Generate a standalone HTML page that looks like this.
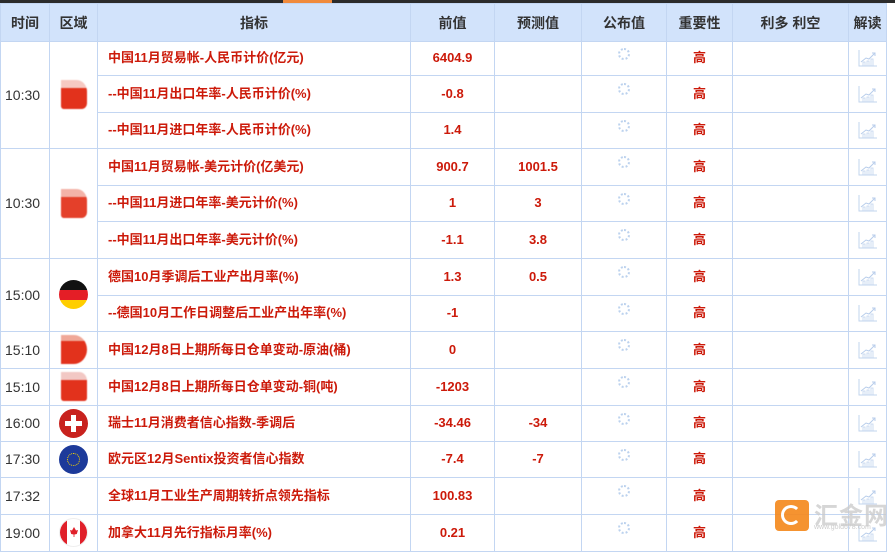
<!DOCTYPE html>
<html><head><meta charset="utf-8"><style>
body{margin:0;width:895px;height:555px;overflow:hidden;background:#fff;font-family:"Liberation Sans","Noto Sans CJK SC",sans-serif;position:relative}
.top{position:absolute;left:0;top:0;width:895px;height:3px;background:#2b2b2b}
.top i{position:absolute;left:283px;width:49px;height:3px;background:#f08a3c}
table{position:absolute;left:0;top:3px;border-collapse:collapse;table-layout:fixed;width:886px}
td,th{border:1px solid #c3d6f2;padding:0;text-align:center;overflow:hidden;white-space:nowrap;line-height:16px}
th{background:#d2e3fb;height:37px;font-size:14px;font-weight:bold;color:#333}
td{font-size:13px;font-weight:bold;color:#cc1a0a;padding-bottom:1px}
td.t{color:#333;font-weight:normal;font-size:14px;text-align:left;padding-left:4px}
td.n{text-align:left;padding-left:10px}
.sp{display:inline-block;vertical-align:middle;width:12px;height:12px;border-radius:50%;border:2px dotted #bcd2ee;box-sizing:border-box;position:relative;top:-5px}
.ch{vertical-align:middle;position:relative;top:0}
.flag{width:29px;height:29px;border-radius:50%;margin:0 auto;overflow:hidden;position:relative}
.logo{position:absolute;left:775px;top:500px;width:34px;height:31px;background:#f58a1f;border-radius:4px;opacity:.92}
.logo:after{content:"";position:absolute;left:6px;top:5px;width:20px;height:20px;border-radius:50%;border:3px solid #fff;border-right-color:transparent;box-sizing:border-box}
.lt{position:absolute;left:814px;top:496px;font-size:24px;color:#ccc;letter-spacing:1px;font-weight:bold;opacity:.8}
.ls{position:absolute;left:814px;top:524px;font-size:7px;color:#ccc}
</style></head><body>
<div class="top"><i></i></div>
<table>
<colgroup><col style="width:49px"><col style="width:48px"><col style="width:313px"><col style="width:84px"><col style="width:87px"><col style="width:85px"><col style="width:66px"><col style="width:116px"><col style="width:38px"></colgroup>
<tr><th>时间</th><th>区域</th><th>指标</th><th>前值</th><th>预测值</th><th>公布值</th><th>重要性</th><th>利多 利空</th><th>解读</th></tr>
<tr style="height:34px"><td class="t" rowspan="3">10:30</td><td rowspan="3"><div class="flag" style="border-radius:0 40% 20% 10%;width:26px;filter:blur(.6px)"><div style="position:absolute;left:0;top:0;width:26px;height:8px;background:#f6c9c2"></div><div style="position:absolute;left:0;top:8px;width:26px;height:21px;background:#e2321c"></div></div></td><td class="n">中国11月贸易帐-人民币计价(亿元)</td><td>6404.9</td><td></td><td><span class="sp"></span></td><td>高</td><td></td><td>CHART</td></tr>
<tr style="height:37px"><td class="n">--中国11月出口年率-人民币计价(%)</td><td>-0.8</td><td></td><td><span class="sp"></span></td><td>高</td><td></td><td>CHART</td></tr>
<tr style="height:36px"><td class="n">--中国11月进口年率-人民币计价(%)</td><td>1.4</td><td></td><td><span class="sp"></span></td><td>高</td><td></td><td>CHART</td></tr>
<tr style="height:37px"><td class="t" rowspan="3">10:30</td><td rowspan="3"><div class="flag" style="border-radius:0 40% 20% 10%;width:26px;filter:blur(.6px)"><div style="position:absolute;left:0;top:0;width:26px;height:8px;background:#f3b3a8"></div><div style="position:absolute;left:0;top:8px;width:26px;height:21px;background:#e4402a"></div></div></td><td class="n">中国11月贸易帐-美元计价(亿美元)</td><td>900.7</td><td>1001.5</td><td><span class="sp"></span></td><td>高</td><td></td><td>CHART</td></tr>
<tr style="height:36px"><td class="n">--中国11月进口年率-美元计价(%)</td><td>1</td><td>3</td><td><span class="sp"></span></td><td>高</td><td></td><td>CHART</td></tr>
<tr style="height:37px"><td class="n">--中国11月出口年率-美元计价(%)</td><td>-1.1</td><td>3.8</td><td><span class="sp"></span></td><td>高</td><td></td><td>CHART</td></tr>
<tr style="height:37px"><td class="t" rowspan="2">15:00</td><td rowspan="2"><div class="flag"><div style="height:10px;background:#111"></div><div style="height:10px;background:#e41e26"></div><div style="height:9px;background:#ffce00"></div></div></td><td class="n">德国10月季调后工业产出月率(%)</td><td>1.3</td><td>0.5</td><td><span class="sp"></span></td><td>高</td><td></td><td>CHART</td></tr>
<tr style="height:36px"><td class="n">--德国10月工作日调整后工业产出年率(%)</td><td>-1</td><td></td><td><span class="sp"></span></td><td>高</td><td></td><td>CHART</td></tr>
<tr style="height:37px"><td class="t">15:10</td><td><div class="flag" style="border-radius:0 50% 50% 0;width:26px;filter:blur(.6px)"><div style="height:6px;background:#f0a898"></div><div style="height:23px;background:#e2321c"></div></div></td><td class="n">中国12月8日上期所每日仓单变动-原油(桶)</td><td>0</td><td></td><td><span class="sp"></span></td><td>高</td><td></td><td>CHART</td></tr>
<tr style="height:37px"><td class="t">15:10</td><td><div class="flag" style="border-radius:0 30% 10% 10%;width:26px;filter:blur(.6px)"><div style="height:8px;background:#f2c8c4"></div><div style="height:21px;background:#e2321c"></div></div></td><td class="n">中国12月8日上期所每日仓单变动-铜(吨)</td><td>-1203</td><td></td><td><span class="sp"></span></td><td>高</td><td></td><td>CHART</td></tr>
<tr style="height:36px"><td class="t">16:00</td><td><div class="flag" style="background:#c8221e"><div style="position:absolute;left:12px;top:6px;width:5px;height:17px;background:#fff"></div><div style="position:absolute;left:6px;top:12px;width:17px;height:5px;background:#fff"></div></div></td><td class="n">瑞士11月消费者信心指数-季调后</td><td>-34.46</td><td>-34</td><td><span class="sp"></span></td><td>高</td><td></td><td>CHART</td></tr>
<tr style="height:36px"><td class="t">17:30</td><td><div class="flag" style="background:#1d3a9a"><div style="position:absolute;left:8px;top:8px;width:13px;height:13px;border-radius:50%;border:1px dotted #f5d300;box-sizing:border-box"></div></div></td><td class="n">欧元区12月Sentix投资者信心指数</td><td>-7.4</td><td>-7</td><td><span class="sp"></span></td><td>高</td><td></td><td>CHART</td></tr>
<tr style="height:37px"><td class="t">17:32</td><td></td><td class="n">全球11月工业生产周期转折点领先指标</td><td>100.83</td><td></td><td><span class="sp"></span></td><td>高</td><td></td><td>CHART</td></tr>
<tr style="height:37px"><td class="t">19:00</td><td><div class="flag" style="background:#fff;border:1px solid #eee;box-sizing:border-box"><div style="position:absolute;left:0;top:0;width:7px;height:29px;background:#e0202a"></div><div style="position:absolute;right:0;top:0;width:7px;height:29px;background:#e0202a"></div><div style="position:absolute;left:10px;top:8px;width:8px;height:10px;background:#e0202a;clip-path:polygon(50% 0,75% 35%,100% 30%,85% 70%,55% 75%,55% 100%,45% 100%,45% 75%,15% 70%,0 30%,25% 35%)"></div></div></td><td class="n">加拿大11月先行指标月率(%)</td><td>0.21</td><td></td><td><span class="sp"></span></td><td>高</td><td></td><td>CHART</td></tr>
</table>
<div class="logo"></div><div class="lt">汇金网</div><div class="ls">www.gold678.com</div>
<script>
document.querySelectorAll('td').forEach(function(t){if(t.textContent==='CHART'){t.innerHTML='<svg class="ch" width="20" height="18" viewBox="0 0 20 18"><path d="M1 1V17H19" fill="none" stroke="#c2d4ee" stroke-width="1"/><path d="M3 13L8 9L11 10L17 4M14 4H17V7" fill="none" stroke="#b8cdeb" stroke-width="1"/><rect x="5" y="13" width="2" height="4" fill="none" stroke="#c2d4ee" stroke-width=".8"/><rect x="9" y="12" width="2" height="5" fill="none" stroke="#c2d4ee" stroke-width=".8"/><rect x="13" y="10" width="2" height="7" fill="none" stroke="#c2d4ee" stroke-width=".8"/></svg>';}});
</script>
</body></html>
